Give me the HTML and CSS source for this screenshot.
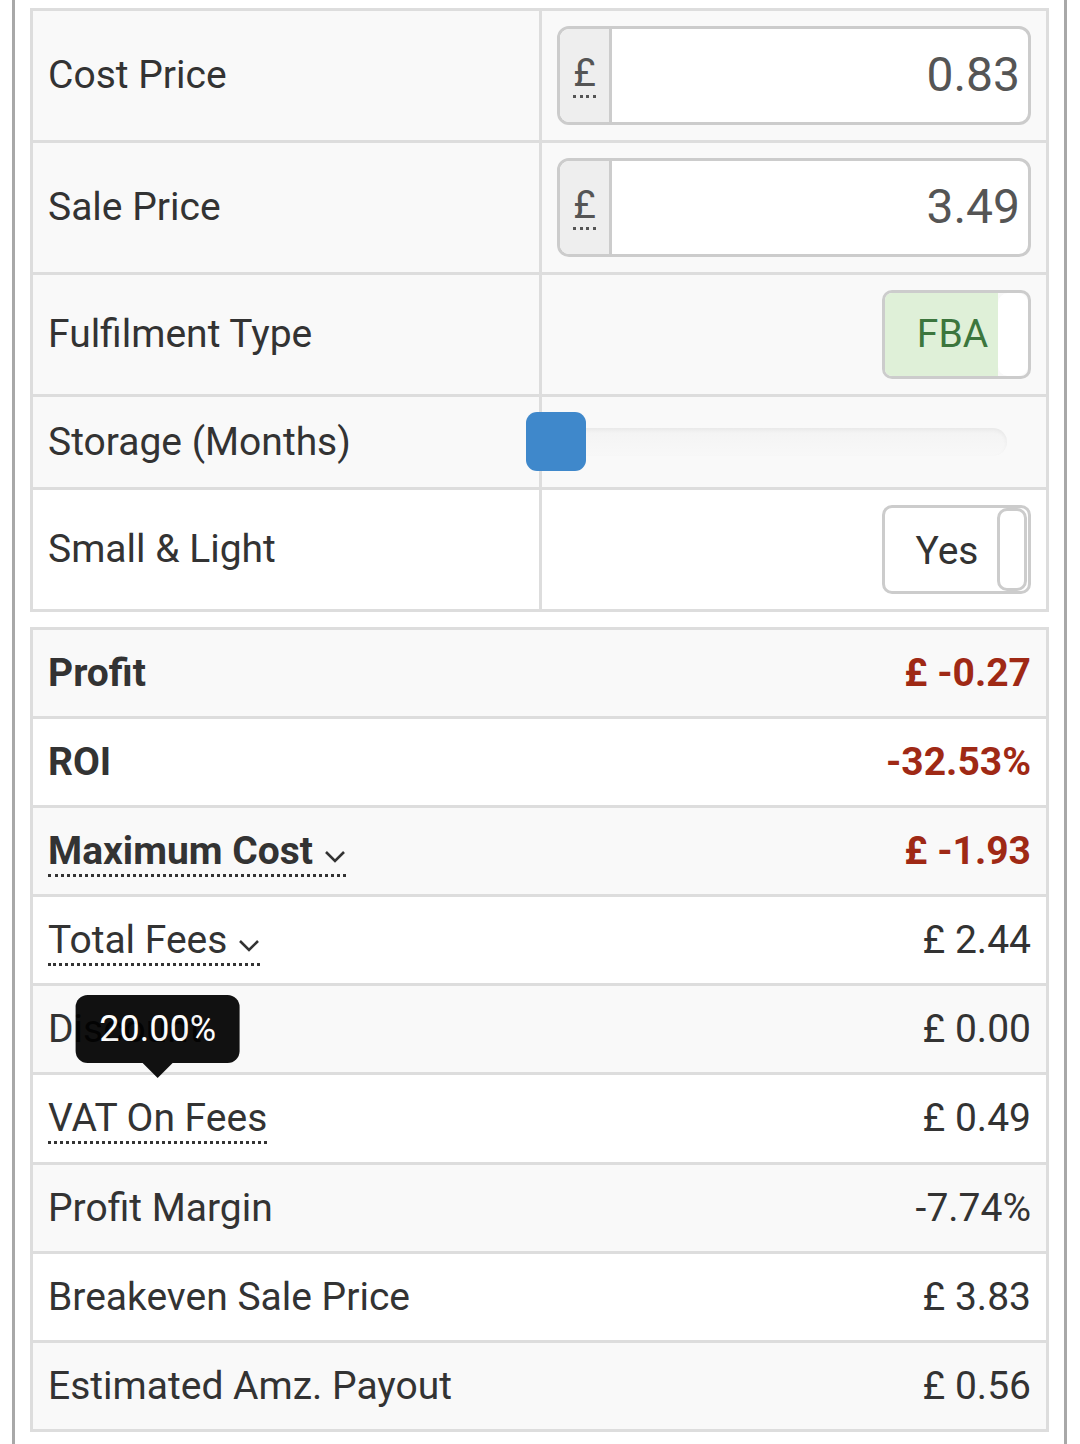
FILE: index.html
```html
<!DOCTYPE html>
<html>
<head>
<meta charset="utf-8">
<link rel="stylesheet" href="styles.css">
</head>
<body>
<div class="panel">
  <table class="calc inputs">
    <tr class="gray">
      <td class="lbl">Cost Price</td>
      <td class="ctl">
        <div class="igroup">
          <span class="addon"><span class="abbr">£</span></span>
          <span class="ival">0.83</span>
        </div>
      </td>
    </tr>
    <tr class="gray">
      <td class="lbl">Sale Price</td>
      <td class="ctl">
        <div class="igroup">
          <span class="addon"><span class="abbr">£</span></span>
          <span class="ival">3.49</span>
        </div>
      </td>
    </tr>
    <tr class="gray">
      <td class="lbl">Fulfilment Type</td>
      <td class="ctl right">
        <div class="toggle on">
          <span class="tlabel">FBA</span>
          <span class="thandle"></span>
        </div>
      </td>
    </tr>
    <tr class="gray">
      <td class="lbl">Storage (Months)</td>
      <td class="ctl slidecell">
        <div class="slider">
          <div class="track"></div>
          <div class="handle"></div>
        </div>
      </td>
    </tr>
    <tr class="white">
      <td class="lbl">Small &amp; Light</td>
      <td class="ctl right">
        <div class="toggle off">
          <span class="tlabel">Yes</span>
          <span class="thandle"></span>
        </div>
      </td>
    </tr>
  </table>

  <table class="calc results">
    <tr class="gray">
      <td class="lbl bold">Profit</td>
      <td class="val bold red">£ -0.27</td>
    </tr>
    <tr class="white">
      <td class="lbl bold">ROI</td>
      <td class="val bold red">-32.53%</td>
    </tr>
    <tr class="gray">
      <td class="lbl bold"><span class="dotted">Maximum Cost <svg class="chev" width="22" height="13" viewBox="0 0 22 13"><path d="M2 2 L11 11 L20 2" fill="none" stroke="#333" stroke-width="2.6"/></svg></span></td>
      <td class="val bold red">£ -1.93</td>
    </tr>
    <tr class="white">
      <td class="lbl"><span class="dotted">Total Fees <svg class="chev" width="22" height="13" viewBox="0 0 22 13"><path d="M2 2 L11 11 L20 2" fill="none" stroke="#333" stroke-width="2.6"/></svg></span></td>
      <td class="val">£ 2.44</td>
    </tr>
    <tr class="gray">
      <td class="lbl">Discount</td>
      <td class="val">£ 0.00</td>
    </tr>
    <tr class="white">
      <td class="lbl"><span class="dotted tipwrap">VAT On Fees<span class="tooltip"><span class="tipbox">20.00%</span><span class="tiparrow"></span></span></span></td>
      <td class="val">£ 0.49</td>
    </tr>
    <tr class="gray">
      <td class="lbl">Profit Margin</td>
      <td class="val">-7.74%</td>
    </tr>
    <tr class="white">
      <td class="lbl">Breakeven Sale Price</td>
      <td class="val">£ 3.83</td>
    </tr>
    <tr class="gray">
      <td class="lbl">Estimated Amz. Payout</td>
      <td class="val">£ 0.56</td>
    </tr>
  </table>
</div>
</body>
</html>
```
FILE: styles.css
```css
html, body {
  margin: 0;
  padding: 0;
  background: #fff;
}
body {
  font-family: Roboto, "Liberation Sans", sans-serif;
  color: #333;
}
.panel {
  margin-left: 12px;
  width: 1055px;
  border-left: 3px solid #a8a8a8;
  border-right: 3px solid #a8a8a8;
  padding: 8px 15px 12px 15px;
  box-sizing: border-box;
  min-height: 1444px;
}
.calc {
  width: 100%;
  border-collapse: collapse;
  font-size: 39px;
  line-height: 56.4px;
}
.calc td {
  border: 3px solid #ddd;
  padding: 15px;
  vertical-align: middle;
}
.results {
  line-height: 56.1px;
}
.results td {
  border-left: none;
  border-right: none;
}
.results td:first-child { border-left: 3px solid #ddd; }
.results td:last-child { border-right: 3px solid #ddd; }
.inputs {
  margin-bottom: 15px;
}
.inputs .lbl {
  width: 476px;
}
tr.gray td { background: #f9f9f9; }
tr.white td { background: #fff; }
.bold { font-weight: 700; }
.red { color: #9f2915; }
.val { text-align: right; }
.right { text-align: right; }

.igroup {
  display: flex;
  height: 99px;
  border: 3px solid #ccc;
  border-radius: 12px;
  overflow: hidden;
  box-sizing: border-box;
  background: #fff;
}
.addon {
  width: 49px;
  background: #eee;
  border-right: 3px solid #ccc;
  display: flex;
  align-items: center;
  justify-content: center;
  color: #555;
  font-size: 39px;
}
.abbr {
  border-bottom: 3px dotted #555;
  line-height: 40px;
  padding-bottom: 2px;
}
.ival {
  flex: 1;
  display: flex;
  align-items: center;
  justify-content: flex-end;
  padding-right: 8px;
  font-size: 48px;
  color: #555;
}

.toggle {
  display: inline-flex;
  width: 149px;
  height: 89px;
  box-sizing: border-box;
  border: 3px solid #ccc;
  border-radius: 10px;
  overflow: hidden;
  vertical-align: middle;
}
.tlabel {
  flex: 1;
  display: flex;
  align-items: center;
  justify-content: center;
  font-size: 39px;
}
.toggle.on .tlabel {
  background: #dff0d8;
  color: #3c763d;
  padding-left: 22px;
}
.toggle.on .thandle {
  width: 30px;
  background: #fff;
  border-radius: 10px;
}
.toggle.off {
  background: #fff;
}
.toggle.off .tlabel {
  color: #333;
  padding-left: 12px;
  padding-top: 4px;
}
.toggle.off .thandle {
  width: 30px;
  margin: 0 1px 0 0;
  border: 3px solid #ccc;
  border-radius: 10px;
  background: #fff;
  box-sizing: border-box;
}

.calc td.slidecell {
  padding-left: 0;
}
.slider {
  position: relative;
  height: 60px;
  margin-left: -16px;
}
.track {
  position: absolute;
  left: 30px;
  width: 451px;
  top: 16px;
  height: 28px;
  border-radius: 14px;
  background: linear-gradient(#f3f3f3, #f8f8f8);
  box-shadow: inset 0 2px 4px rgba(0,0,0,0.05);
}
.handle {
  position: absolute;
  left: 0;
  top: 0;
  width: 60px;
  height: 59px;
  border-radius: 11px;
  background: #3f88cb;
}

.dotted {
  border-bottom: 3px dotted #333;
}
.chev {
  vertical-align: 1px;
  margin-left: 1px;
}
.tipwrap {
  position: relative;
}
.tooltip {
  position: absolute;
  left: 50%;
  bottom: 100%;
  margin-bottom: 17px;
  transform: translateX(-50%);
  display: flex;
  flex-direction: column;
  align-items: center;
  opacity: 0.93;
}
.tipbox {
  background: #000;
  color: #fff;
  font-weight: 400;
  font-size: 36px;
  line-height: 50px;
  padding: 9px 24px;
  border-radius: 12px;
  white-space: nowrap;
}
.tiparrow {
  width: 0;
  height: 0;
  border-left: 15px solid transparent;
  border-right: 15px solid transparent;
  border-top: 15px solid #000;
}
```
